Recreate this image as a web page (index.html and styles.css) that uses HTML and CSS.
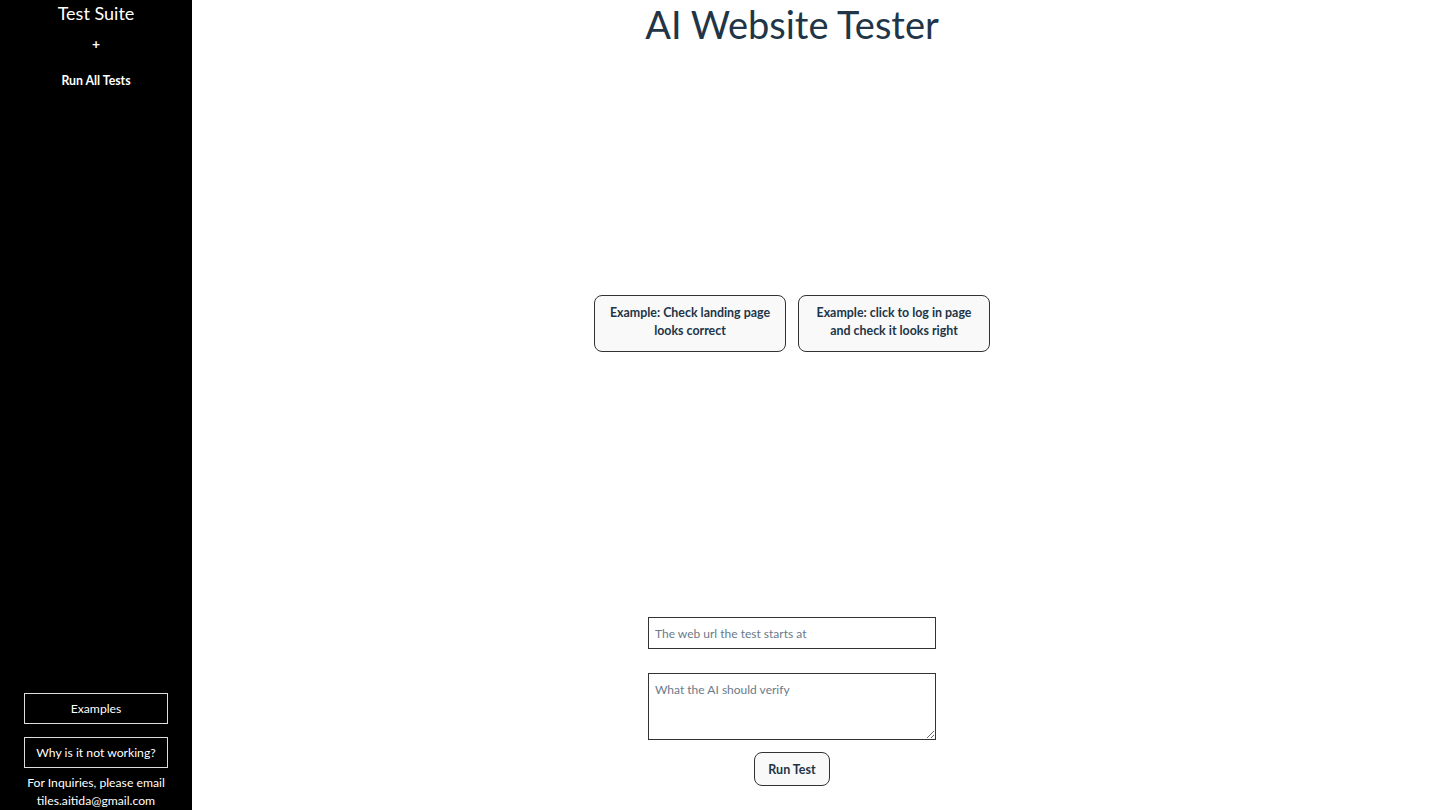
FILE: index.html
```html
<!DOCTYPE html>
<html>
<head>
<meta charset="utf-8">
<link rel="stylesheet" href="styles.css">
</head>
<body>
<div class="app">
  <aside class="sidebar">
    <div class="side-top">
      <div class="side-title">Test Suite</div>
      <div class="side-plus">+</div>
      <div class="side-run">Run All Tests</div>
    </div>
    <div class="side-bottom">
      <button class="side-btn">Examples</button>
      <button class="side-btn">Why is it not working?</button>
      <div class="side-contact">For Inquiries, please email<br>tiles.aitida@gmail.com</div>
    </div>
  </aside>
  <main class="main">
    <h1 class="title">AI Website Tester</h1>
    <div class="examples">
      <button class="ex-btn">Example: Check landing page looks correct</button>
      <button class="ex-btn">Example: click to log in page and check it looks right</button>
    </div>
    <div class="form">
      <input class="url" type="text" placeholder="The web url the test starts at">
      <textarea class="verify" placeholder="What the AI should verify"></textarea>
      <button class="run">Run Test</button>
    </div>
  </main>
</div>
</body>
</html>
```
FILE: styles.css
```css
* { box-sizing: border-box; }
html, body { margin: 0; padding: 0; height: 100%; overflow: hidden; }
body {
  font-family: Lato, "Open Sans", sans-serif;
  background: #fff;
  color: #213547;
}
.app { display: flex; height: 810px; }
.sidebar {
  width: 192px;
  flex: none;
  background: #000;
  color: #fff;
  display: flex;
  flex-direction: column;
  justify-content: space-between;
  align-items: center;
}
.side-top { display: flex; flex-direction: column; align-items: center; }
.side-title { font-size: 18px; line-height: 26px; margin-top: 0; font-weight: 400; }
.side-plus { font-size: 14px; font-weight: 700; line-height: 16px; margin-top: 10px; }
.side-run { font-size: 12.3px; font-weight: 700; line-height: 16px; margin-top: 21px; }
.side-bottom { display: flex; flex-direction: column; align-items: center; width: 100%; margin-bottom: 0; }
.side-btn {
  width: 144px; height: 31px;
  background: #000; color: #fff;
  border: 1px solid #ddd;
  font-family: inherit; font-size: 12.2px;
  padding: 0;
  margin-bottom: 13px;
}
.side-btn + .side-btn { margin-bottom: 6px; }
.side-contact { font-size: 12.2px; line-height: 18px; text-align: center; }
.main {
  flex: 1;
  padding-right: 48px;
  display: flex;
  flex-direction: column;
  align-items: center;
}
.title {
  margin: 0;
  font-size: 38px;
  font-weight: 400;
  line-height: 48px;
  color: #213547;
}
.examples { display: flex; gap: 12px; margin-top: 247px; }
.ex-btn {
  width: 192px; height: 57px;
  border-radius: 8px;
  border: 1px solid #333;
  background: #f9f9f9;
  color: #213547;
  font-family: inherit;
  font-size: 12.4px;
  font-weight: 700;
  line-height: 18px;
  padding: 0 8px 3px;
}
.form { display: flex; flex-direction: column; align-items: center; margin-top: 265px; }
.url {
  width: 288px; height: 32px;
  border: 1px solid #333;
  font-family: inherit; font-size: 12px;
  padding: 0 6px;
  color: #213547;
}
.verify {
  width: 288px; height: 67px;
  margin-top: 24px;
  border: 1px solid #333;
  font-family: inherit; font-size: 12px;
  padding: 8px 6px;
  resize: vertical;
}
.url::placeholder, .verify::placeholder { color: #6b7a8a; }
.run {
  margin-top: 12px;
  width: 76px; height: 34px;
  border-radius: 8px;
  border: 1px solid #333;
  background: #f9f9f9;
  color: #213547;
  font-family: inherit; font-size: 12.5px; font-weight: 700;
  padding: 0;
}
```
